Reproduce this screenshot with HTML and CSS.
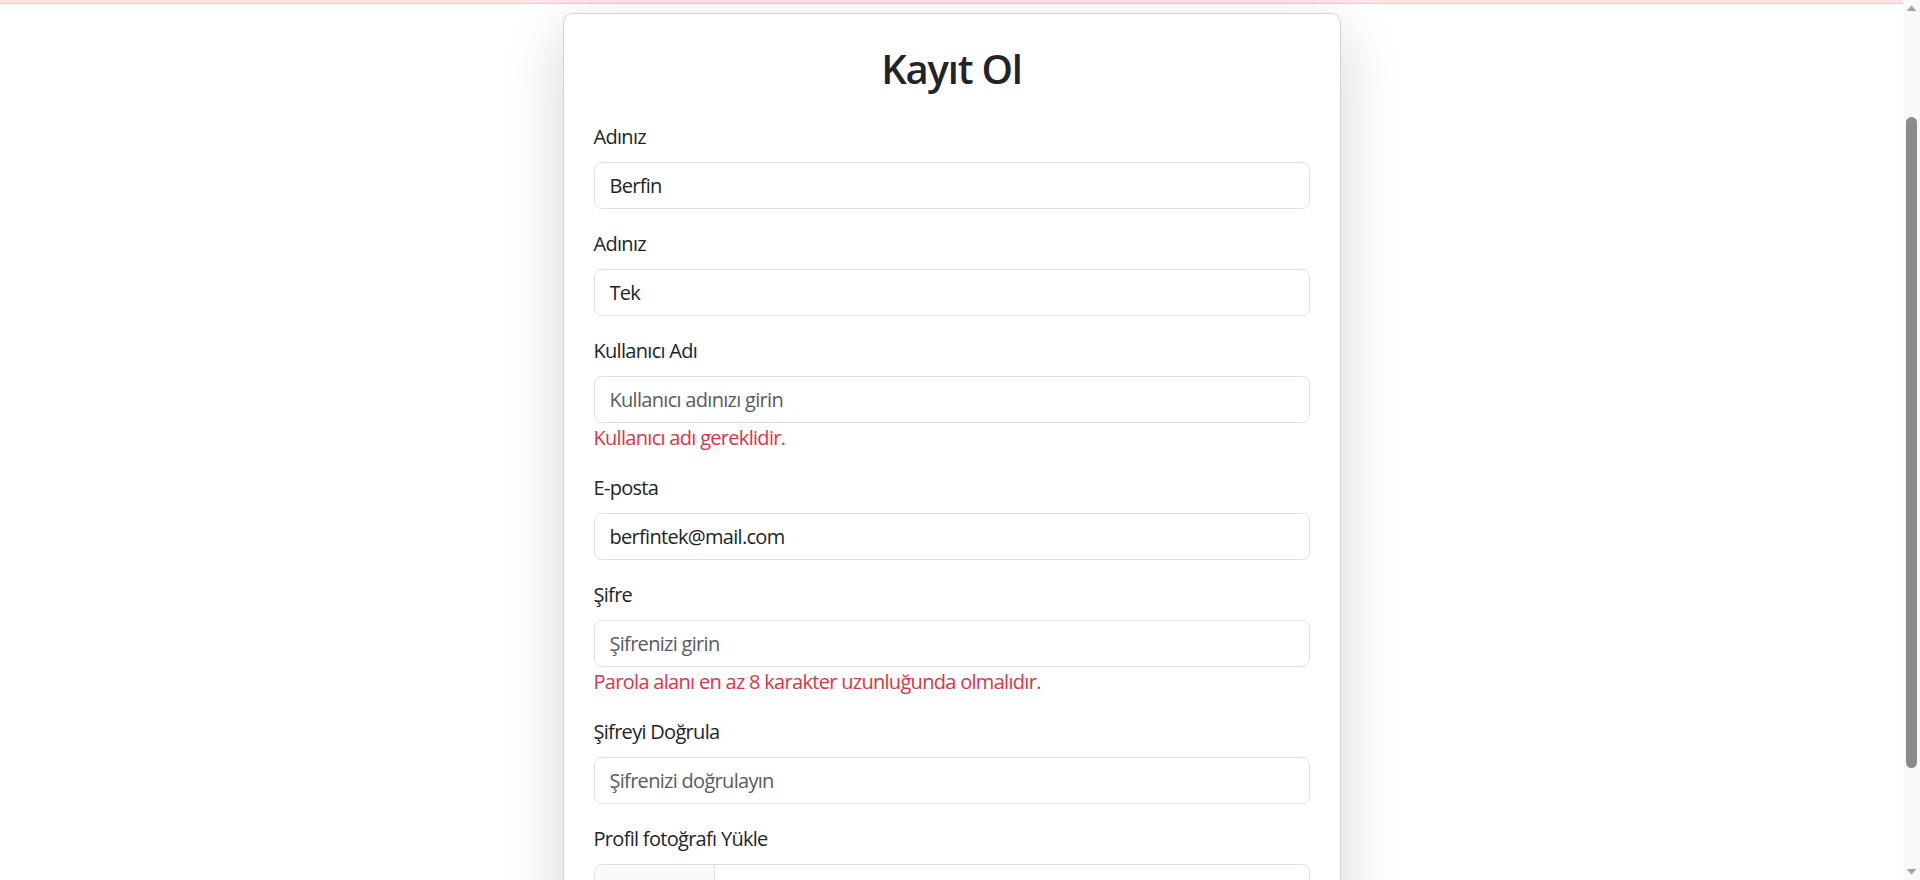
FILE: index.html
```html
<!DOCTYPE html>
<html lang="tr">
<head>
<meta charset="utf-8">
<title>Kayıt Ol</title>
<link rel="stylesheet" href="styles.css">
</head>
<body>
<div class="screen">
  <div class="viewport">
    <div class="alert-strip"></div>
    <main class="page">
      <section class="card">
        <h2 class="card-title">Kayıt Ol</h2>
        <form class="form">
          <div class="group">
            <label class="label">Adınız</label>
            <input class="control" type="text" value="Berfin">
          </div>
          <div class="group">
            <label class="label">Adınız</label>
            <input class="control" type="text" value="Tek">
          </div>
          <div class="group">
            <label class="label">Kullanıcı Adı</label>
            <input class="control" type="text" placeholder="Kullanıcı adınızı girin">
            <div class="error">Kullanıcı adı gereklidir.</div>
          </div>
          <div class="group">
            <label class="label">E-posta</label>
            <input class="control" type="text" value="berfintek@mail.com">
          </div>
          <div class="group">
            <label class="label">Şifre</label>
            <input class="control" type="text" placeholder="Şifrenizi girin">
            <div class="error">Parola alanı en az 8 karakter uzunluğunda olmalıdır.</div>
          </div>
          <div class="group">
            <label class="label">Şifreyi Doğrula</label>
            <input class="control" type="text" placeholder="Şifrenizi doğrulayın">
          </div>
          <div class="group">
            <label class="label">Profil fotoğrafı Yükle</label>
            <div class="file-control">
              <span class="file-btn"></span>
              <span class="file-name"></span>
            </div>
          </div>
        </form>
      </section>
    </main>
  </div>
  <div class="scrollbar">
    <svg class="arrow" width="17" height="17" viewBox="0 0 17 17"><polygon points="3.5,11 13.5,11 8.5,5.5" fill="#a3a3a3"/></svg>
    <div class="track"><div class="thumb"></div></div>
    <svg class="arrow" width="17" height="17" viewBox="0 0 17 17"><polygon points="3.5,6 13.5,6 8.5,11.5" fill="#a3a3a3"/></svg>
  </div>
</div>
</body>
</html>
```
FILE: styles.css
```css
html, body {
  margin: 0;
  padding: 0;
  height: 100%;
  overflow: hidden;
  background: #ffffff;
}

body {
  font-family: "Open Sans", "Noto Sans", sans-serif;
  color: #212529;
}

.screen {
  display: flex;
  height: 880px;
  width: 1920px;
}

.viewport {
  flex: 1;
  display: flex;
  flex-direction: column;
  overflow: hidden;
  min-width: 0;
}

.alert-strip {
  height: 3px;
  flex: none;
  background: #fce4e4;
  border-bottom: 1px solid #e6cfd0;
}

.page {
  display: flex;
  justify-content: center;
  padding-top: 9px;
}

.card {
  box-sizing: border-box;
  width: 778px;
  flex: none;
  background: #fff;
  border: 1px solid #d4d4d4;
  border-radius: 10px;
  padding: 30px 30px 40px;
  box-shadow: 0 20px 60px rgba(0, 0, 0, 0.175);
}

.card-title {
  margin: 0 0 30px;
  font-size: 40px;
  line-height: 48px;
  font-weight: 600;
  text-align: center;
  color: #212529;
  letter-spacing: -0.03em;
  position: relative;
  top: 1px;
}

.form {
  display: flex;
  flex-direction: column;
}

.group {
  display: flex;
  flex-direction: column;
  margin-bottom: 20px;
}

.label {
  display: block;
  font-size: 20px;
  line-height: 30px;
  margin-bottom: 10px;
  color: #212529;
  letter-spacing: -0.035em;
}

.control {
  box-sizing: border-box;
  height: 47px;
  width: 100%;
  margin: 0;
  padding: 0 15px;
  font-family: inherit;
  font-size: 20px;
  color: #212529;
  background: #fff;
  border: 1px solid #dee2e6;
  border-radius: 7.5px;
  outline: none;
  letter-spacing: -0.035em;
}

.control::placeholder {
  color: #595c5f;
  opacity: 1;
}

.error {
  font-size: 20px;
  line-height: 30px;
  color: #dc3545;
  letter-spacing: -0.035em;
}

.file-control {
  box-sizing: border-box;
  height: 47px;
  display: flex;
  border: 1px solid #dee2e6;
  border-radius: 7.5px;
  overflow: hidden;
}

.file-btn {
  box-sizing: border-box;
  width: 120px;
  flex: none;
  background: #f8f9fa;
  border-right: 1px solid #dee2e6;
}

.file-name {
  flex: 1;
}

.scrollbar {
  width: 17px;
  flex: none;
  display: flex;
  flex-direction: column;
  background: #f9f9f9;
}

.arrow {
  display: block;
  flex: none;
}

.track {
  flex: 1;
  display: flex;
  flex-direction: column;
  align-items: center;
}

.thumb {
  margin-top: 100px;
  width: 11px;
  height: 651px;
  border-radius: 6px;
  background: #8a8a8a;
}
```
